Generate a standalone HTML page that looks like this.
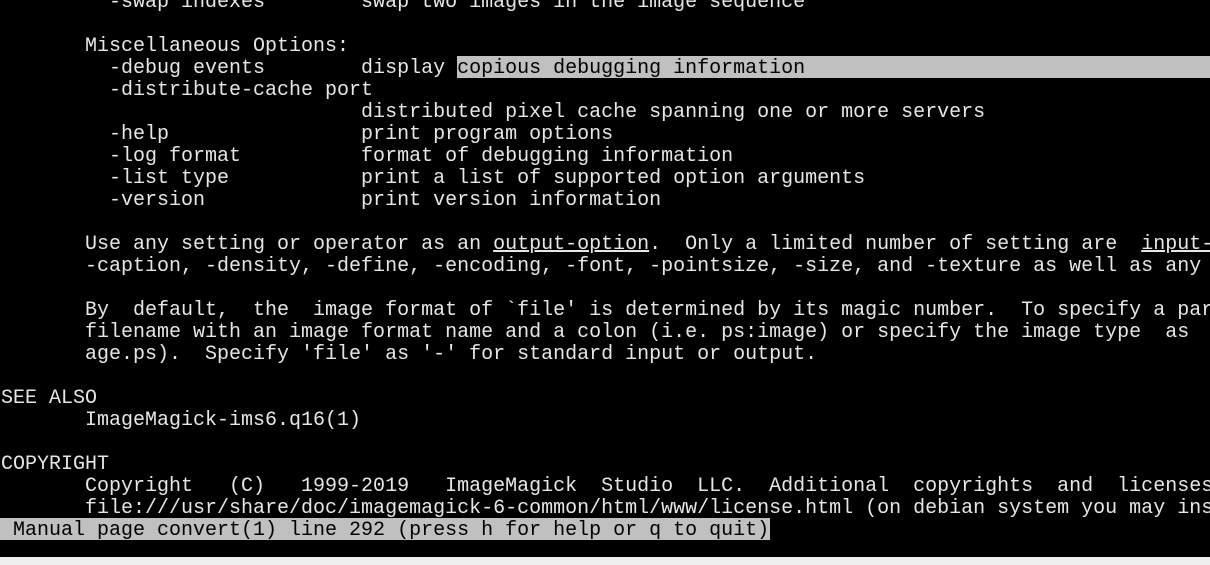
<!DOCTYPE html>
<html><head><meta charset="utf-8"><style>
html,body{margin:0;padding:0;background:#000;width:1210px;height:565px;overflow:hidden;position:relative}
pre{position:absolute;left:1px;top:-8px;width:1209px;height:560px;overflow:hidden;margin:0;font-family:"Liberation Mono",monospace;font-size:20px;line-height:22px;color:#e6e6e6;white-space:pre}
.hl{position:absolute;left:457px;top:56px;width:753px;height:22px;background:#c0c0c0}
.st{position:absolute;left:0;top:518px;width:770px;height:22px;background:#c0c0c0}
.b{color:#000}
u{text-decoration:underline}
.bot{position:absolute;left:0;top:557px;width:1210px;height:8px;background:#f0f0f0}
</style></head><body>
<div class="hl"></div><div class="st"></div><div class="bot"></div>
<pre>         -swap indexes        swap two images in the image sequence

       Miscellaneous Options:
         -debug events        display <span class="b">copious debugging information</span>
         -distribute-cache port
                              distributed pixel cache spanning one or more servers
         -help                print program options
         -log format          format of debugging information
         -list type           print a list of supported option arguments
         -version             print version information

       Use any setting or operator as an <u>output-option</u>.  Only a limited number of setting are  <u>input-</u>
       -caption, -density, -define, -encoding, -font, -pointsize, -size, and -texture as well as any

       By  default,  the  image format of `file' is determined by its magic number.  To specify a par
       filename with an image format name and a colon (i.e. ps:image) or specify the image type  as
       age.ps).  Specify 'file' as '-' for standard input or output.

SEE ALSO
       ImageMagick-ims6.q16(1)

COPYRIGHT
       Copyright   (C)   1999-2019   ImageMagick  Studio  LLC.  Additional  copyrights  and  licenses
       file:///usr/share/doc/imagemagick-6-common/html/www/license.html (on debian system you may ins
<span class="b"> Manual page convert(1) line 292 (press h for help or q to quit)</span></pre>
</body></html>
